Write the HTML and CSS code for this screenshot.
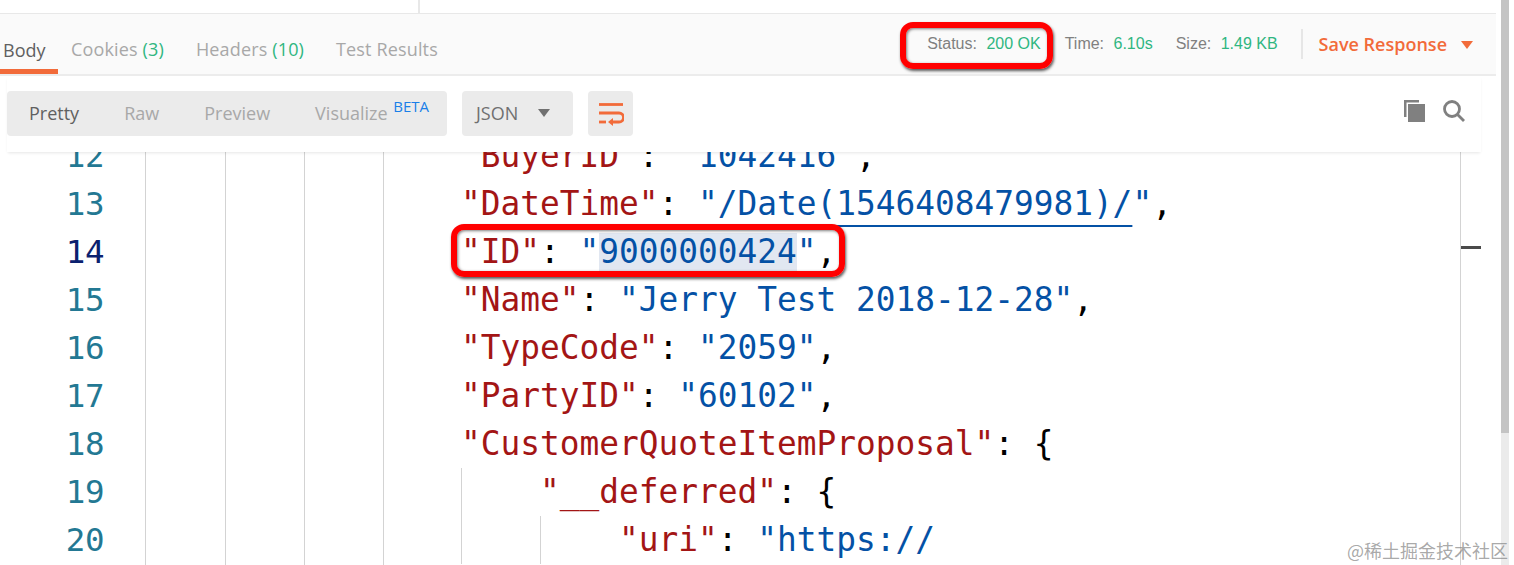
FILE: index.html
```html
<!DOCTYPE html>
<html lang="en">
<head>
<meta charset="utf-8">
<title>Response</title>
<link rel="stylesheet" href="styles.css">
</head>
<body>
<div class="app">
  <main class="main">
    <div class="top-strip"><span class="top-divider"></span></div>
    <div class="tabbar">
      <nav class="tabs">
        <span class="tab active">Body</span>
        <span class="tab">Cookies <em>(3)</em></span>
        <span class="tab">Headers <em>(10)</em></span>
        <span class="tab">Test Results</span>
      </nav>
      <div class="meta">
        <span class="stat status">Status: <b>200 OK</b></span>
        <span class="stat time">Time: <b>6.10s</b></span>
        <span class="stat size">Size: <b>1.49 KB</b></span>
        <span class="save">Save Response<i class="caret"></i></span>
      </div>
    </div>
    <div class="toolbar">
      <div class="seg">
        <span class="seg-item on">Pretty</span>
        <span class="seg-item raw">Raw</span>
        <span class="seg-item preview">Preview</span>
        <span class="seg-item">Visualize <sup>BETA</sup></span>
      </div>
      <div class="format">JSON<i class="caret grey"></i></div>
      <div class="wrap-btn">
        <svg width="26" height="24" viewBox="0 0 26 24" fill="none" stroke="#f26b3a" stroke-width="2.8">
          <path d="M1 2.5H25"/>
          <path d="M1 11H21a3.8 3.8 0 0 1 0 9H13"/>
          <path d="M1 20H8"/>
          <path d="M15 16v8l-5-4z" fill="#f26b3a" stroke="none"/>
        </svg>
      </div>
      <div class="tools">
        <svg width="24" height="24" viewBox="0 0 24 24" fill="#808080">
          <path d="M1 1h15v2.500H3.500V18H1z"/>
          <path d="M5 5h17v18H5z"/>
        </svg>
        <svg width="24" height="24" viewBox="0 0 24 24" fill="none" stroke="#808080" stroke-width="2.800">
          <circle cx="10" cy="10" r="7.500"/>
          <path d="M15.500 15.500L22 22"/>
        </svg>
      </div>
    </div>
    <div class="editor">
      <div class="code"><span class="ln">12</span><span class="guides"></span><span class="src in1"><s class="k">"BuyerID"</s>: <s class="v">"1042416"</s>,</span></div>
      <div class="code"><span class="ln">13</span><span class="src in1"><s class="k">"DateTime"</s>: <s class="v"><u class="lnk">"/Date(1546408479981)/</u>"</s>,</span></div>
      <div class="code"><span class="ln cur">14</span><span class="src in1"><s class="k">"ID"</s>: <s class="v">"<mark>9000000424</mark>"</s>,</span></div>
      <div class="code"><span class="ln">15</span><span class="src in1"><s class="k">"Name"</s>: <s class="v">"Jerry Test 2018-12-28"</s>,</span></div>
      <div class="code"><span class="ln">16</span><span class="src in1"><s class="k">"TypeCode"</s>: <s class="v">"2059"</s>,</span></div>
      <div class="code"><span class="ln">17</span><span class="src in1"><s class="k">"PartyID"</s>: <s class="v">"60102"</s>,</span></div>
      <div class="code"><span class="ln">18</span><span class="src in1"><s class="k">"CustomerQuoteItemProposal"</s>: {</span></div>
      <div class="code"><span class="ln">19</span><span class="src in2"><s class="k">"__deferred"</s>: {</span></div>
      <div class="code"><span class="ln">20</span><span class="src in3"><s class="k">"uri"</s>: <s class="v">"https://</s></span></div>
      <span class="ruler"></span>
      <span class="ruler-mark"></span>
    </div>
  </main>
  <div class="scrollbar"><span class="thumb"></span></div>
</div>
<span class="note note-status"></span>
<span class="note note-id"></span>
<span class="watermark">@稀土掘金技术社区</span>
</body>
</html>
```
FILE: styles.css
```css
* { box-sizing: border-box; }
html, body { margin: 0; height: 100%; overflow: hidden; background: #fff; }
body { position: relative; font-family: "Open Sans", "Noto Sans", sans-serif; }
.app { display: flex; height: 565px; }
.main { width: 1496px; flex: none; display: flex; flex-direction: column; }
.top-strip { height: 14px; border-bottom: 1px solid #e8e8e8; display: flex; padding-left: 418px; }
.top-divider { width: 2px; background: #e8e8e8; }
.tabbar { height: 62px; background: #fafafa; border-bottom: 2px solid #ececec; display: flex; justify-content: space-between; }
.tabs { display: flex; align-items: flex-end; }
.tab { height: 47px; padding-top: 10px; font-size: 18px; line-height: 24px; color: #a8a8a8; margin-right: 32px; white-space: nowrap; letter-spacing: .15px; }
.tab em { font-style: normal; color: #2fb681; }
.tab.active { color: #606060; width: 58px; padding-left: 3px; margin-right: 13px; height: 46px; border-bottom: 5px solid #f26b3a; letter-spacing: 0; }
.meta { display: flex; align-items: flex-start; padding-top: 15px; padding-right: 23px; }
.stat { font-family: "Liberation Sans", Arial, sans-serif; font-size: 16px; line-height: 30px; color: #808080; white-space: nowrap; }
.stat b { font-weight: 400; color: #2fb681; margin-left: 5px; }
.time { margin-left: 24px; }
.size { margin-left: 23px; }
.save { height: 30px; line-height: 30px; margin-left: 23px; padding-left: 16px; border-left: 2px solid #e6e6e6; font-size: 18px; font-weight: 600; color: #f26b3a; white-space: nowrap; display: flex; align-items: center; }
.caret { display: inline-block; margin-left: 14px; margin-top: 2px; border: 6.500px solid transparent; border-bottom: 0; border-top: 8px solid #f26b3a; }
.caret.grey { border-top-color: #707070; margin-left: 20px; margin-top: 0; }
.toolbar { height: 76px; flex: none; display: flex; align-items: flex-start; margin: 0 15px 0 7px; padding-top: 15px; box-shadow: 0 2px 3px -1px rgba(0,0,0,.1); position: relative; z-index: 2; background: #fff; }
.seg { width: 440px; height: 45px; background: #ebebeb; border-radius: 4px; display: flex; align-items: center; padding: 0 0 2px 22px; font-size: 18px; }
.seg-item { color: #a8a8a8; margin-right: 45px; white-space: nowrap; position: relative; }
.seg-item.on { color: #606060; }
sup { font-size: 15px; font-weight: 500; color: #1a7fe8; line-height: 0; vertical-align: 8px; margin-left: 1px; }
.format { width: 111px; height: 45px; margin-left: 15px; background: #ebebeb; border-radius: 4px; display: flex; align-items: center; padding: 0 0 2px 14px; font-size: 18px; color: #707070; }
.wrap-btn { width: 45px; height: 45px; margin-left: 15px; background: #ebebeb; border-radius: 4px; display: flex; align-items: center; justify-content: center; }
.tools { margin-left: auto; display: flex; gap: 15px; padding-top: 8px; padding-right: 15px; }
.editor { position: relative; flex: 1; overflow: hidden; margin-top: -20px; }
.code { height: 48px; display: flex; font-family: "DejaVu Sans Mono", monospace; font-size: 32.800px; line-height: 48px; white-space: pre; }
.ln { width: 104px; text-align: right; color: #237893; flex: none; font-size: 32.500px; letter-spacing: -.5px; }
.ln.cur { color: #0b216f; }
.guides { position: absolute; top: 0; bottom: 0; left: 145px; width: 240px; border-left: 1px solid #d3d3d3; background: linear-gradient(#d3d3d3,#d3d3d3) 79px 0/1px 100% no-repeat, linear-gradient(#d3d3d3,#d3d3d3) 158px 0/1px 100% no-repeat, linear-gradient(#d3d3d3,#d3d3d3) 237px 0/1px 100% no-repeat; }
.src { color: #000; }
.src s { text-decoration: none; }
.in1 { margin-left: 357px; }
.in2, .in3 { margin-left: 357px; border-left: 1px solid #d3d3d3; }
.in2 { padding-left: 78px; }
.in3 { padding-left: 157px; background: linear-gradient(#d3d3d3,#d3d3d3) 78px 0/1px 100% no-repeat; }
.k { color: #a31515; }
.v { color: #0451a5; }
.lnk { text-decoration: underline; text-underline-offset: 10px; text-decoration-thickness: 2px; }
mark { background: #e1e7f1; color: inherit; }
.ruler { position: absolute; top: 0; bottom: 0; left: 1460px; width: 1px; background: #d3d3d3; }
.ruler-mark { position: absolute; top: 114px; left: 1461px; width: 20px; height: 3px; background: #4a4a4a; }
.scrollbar { width: 13px; flex: none; padding-left: 5px; }
.thumb { display: block; width: 8px; height: 565px; background: linear-gradient(#c4c4c4 433px, #ebebeb 433px); }
.note { position: absolute; border: 6px solid #f00; border-radius: 13px; box-shadow: 1px 2px 3px rgba(0,0,0,.65), inset 1px 1px 3px rgba(0,0,0,.5); }
.note-status { left: 900px; top: 22px; width: 153px; height: 47px; }
.note-id { left: 451px; top: 224px; width: 394px; height: 53px; }
.watermark { position: absolute; right: 6px; bottom: 6px; font-family: "Noto Sans CJK SC", sans-serif; font-size: 18px; line-height: 18px; color: rgba(120,120,120,.65); }
```
